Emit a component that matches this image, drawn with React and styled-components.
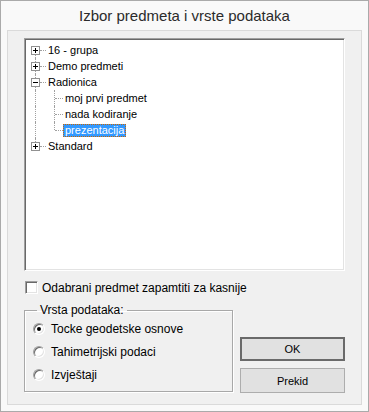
import React from 'react';
import styled, { createGlobalStyle } from 'styled-components';

const Global = createGlobalStyle`
  html, body { margin: 0; padding: 0; background: #ffffff; }
  body { font-family: "Liberation Sans", Arial, sans-serif; }
  * { box-sizing: border-box; }
`;

const Window = styled.div`
  width: 369px;
  height: 412px;
  border: 1px solid #aaaaaa;
  background: #f9f9f9;
  display: flex;
  flex-direction: column;
  padding: 0 6px 6px 6px;
`;

const TitleBar = styled.div`
  height: 29px;
  display: flex;
  align-items: center;
  justify-content: center;
  font-family: "Liberation Sans", Arial, sans-serif;
  font-size: 15px;
  color: #2b2b2b;
  padding-bottom: 1px;
`;

const Client = styled.div`
  flex: 1;
  border: 1px solid #dadada;
  background: #f0f0f0;
  display: flex;
  flex-direction: column;
  padding: 7px 16px 11px 16px;
`;

const Sunken = `
  border: 1px solid;
  border-color: #a0a0a0 #ffffff #ffffff #a0a0a0;
  box-shadow: inset 1px 1px 0 #696969, inset -1px -1px 0 #e3e3e3;
`;

const Tree = styled.div`
  height: 233px;
  ${Sunken}
  background: #ffffff;
  padding: 3px 1px 1px 1px;
  font-family: "Liberation Sans", Arial, sans-serif;
  font-size: 11px;
  color: #000;
`;

const Row = styled.div`
  height: 16px;
  display: flex;
  align-items: center;
`;

const Gutter = styled.div`
  position: relative;
  width: ${p => p.$w}px;
  height: 16px;
  flex-shrink: 0;
`;

const VLine = styled.span`
  position: absolute;
  left: ${p => p.$x}px;
  top: ${p => p.$top}px;
  height: ${p => p.$h}px;
  border-left: 1px dotted #a0a0a0;
`;

const HLine = styled.span`
  position: absolute;
  left: ${p => p.$x}px;
  top: 8px;
  width: ${p => p.$w}px;
  border-top: 1px dotted #a0a0a0;
`;

const ExpandBox = styled.span`
  position: absolute;
  left: 5px;
  top: 4px;
  width: 9px;
  height: 9px;
  border: 1px solid #919191;
  background: #ffffff;
  &::before {
    content: '';
    position: absolute;
    left: 1px;
    top: 3px;
    width: 5px;
    height: 1px;
    background: #000;
  }
  &::after {
    content: '';
    position: absolute;
    left: 3px;
    top: 1px;
    width: 1px;
    height: 5px;
    background: #000;
    display: ${p => (p.$open ? 'none' : 'block')};
  }
`;

const Label = styled.span`
  line-height: 11px;
  height: 13px;
  padding: 0 1px;
  border: 1px solid transparent;
  white-space: nowrap;
  ${p =>
    p.$selected &&
    `
    background: #3399ff;
    color: #ffffff;
    border: 1px dotted #cc6600;
  `}
`;

const CheckRow = styled.label`
  display: flex;
  align-items: center;
  gap: 4px;
  margin-top: 10px;
  margin-left: 1px;
  height: 13px;
  font-size: 12px;
  color: #000;
`;

const CheckBox = styled.span`
  width: 13px;
  height: 13px;
  background: #ffffff;
  ${Sunken}
`;

const Bottom = styled.div`
  display: flex;
  align-items: flex-end;
  justify-content: space-between;
  margin-top: 9px;
`;

const Group = styled.fieldset`
  margin: 0;
  width: 209px;
  height: 89px;
  border: 1px solid #a8a8a8;
  box-shadow: inset 1px 1px 0 #ffffff, 1px 1px 0 #ffffff;
  padding: 0 8px 3px 8px;
`;

const Legend = styled.legend`
  font-size: 12px;
  line-height: 14px;
  padding: 0 3px;
  margin-left: 4px;
  color: #000;
`;

const RadioRow = styled.div`
  height: 23px;
  display: flex;
  align-items: center;
  gap: 6px;
  font-size: 12px;
  color: #000;
`;

const Radio = styled.span`
  position: relative;
  width: 12px;
  height: 12px;
  border-radius: 50%;
  background: #ffffff;
  border: 1px solid;
  border-color: #a0a0a0 #ffffff #ffffff #a0a0a0;
  box-shadow: inset 1px 1px 0 #696969, inset -1px -1px 0 #e3e3e3;
  &::after {
    content: '';
    position: absolute;
    left: 3px;
    top: 3px;
    width: 4px;
    height: 4px;
    border-radius: 50%;
    background: #000;
    display: ${p => (p.$on ? 'block' : 'none')};
  }
`;

const Buttons = styled.div`
  display: flex;
  flex-direction: column;
  gap: 7px;
  margin-bottom: -1px;
`;

const Button = styled.button`
  width: 105px;
  height: ${p => (p.$default ? 24 : 25)}px;
  background: #e1e1e1;
  border: ${p => (p.$default ? '2px solid #6a6a6a' : '1px solid #adadad')};
  font-family: "Liberation Sans", Arial, sans-serif;
  font-size: 11px;
  color: #000;
  padding: 0;
`;

const rows = [
  { label: '16 - grupa', level: 0, box: 'plus', first: true },
  { label: 'Demo predmeti', level: 0, box: 'plus' },
  { label: 'Radionica', level: 0, box: 'minus' },
  { label: 'moj prvi predmet', level: 1 },
  { label: 'nada kodiranje', level: 1 },
  { label: 'prezentacija', level: 1, selected: true, lastChild: true },
  { label: 'Standard', level: 0, box: 'plus', last: true },
];

function TreeRow({ r }) {
  if (r.level === 0) {
    const top = r.first ? 8 : 0;
    const h = r.first ? 8 : r.last ? 8 : 16;
    return (
      <Row>
        <Gutter $w={20}>
          <VLine $x={9} $top={top} $h={h} />
          <HLine $x={14} $w={6} />
          <ExpandBox $open={r.box === 'minus'} />
        </Gutter>
        <Label>{r.label}</Label>
      </Row>
    );
  }
  return (
    <Row>
      <Gutter $w={37}>
        <VLine $x={9} $top={0} $h={16} />
        <VLine $x={28} $top={0} $h={r.lastChild ? 8 : 16} />
        <HLine $x={29} $w={8} />
      </Gutter>
      <Label $selected={r.selected}>{r.label}</Label>
    </Row>
  );
}

export default function App() {
  return (
    <>
      <Global />
      <Window>
        <TitleBar>Izbor predmeta i vrste podataka</TitleBar>
        <Client>
          <Tree>
            {rows.map(r => (
              <TreeRow key={r.label} r={r} />
            ))}
          </Tree>
          <CheckRow>
            <CheckBox />
            Odabrani predmet zapamtiti za kasnije
          </CheckRow>
          <Bottom>
            <Group>
              <Legend>Vrsta podataka:</Legend>
              <RadioRow>
                <Radio $on />
                Tocke geodetske osnove
              </RadioRow>
              <RadioRow>
                <Radio />
                Tahimetrijski podaci
              </RadioRow>
              <RadioRow>
                <Radio />
                Izvještaji
              </RadioRow>
            </Group>
            <Buttons>
              <Button $default>OK</Button>
              <Button>Prekid</Button>
            </Buttons>
          </Bottom>
        </Client>
      </Window>
    </>
  );
}
